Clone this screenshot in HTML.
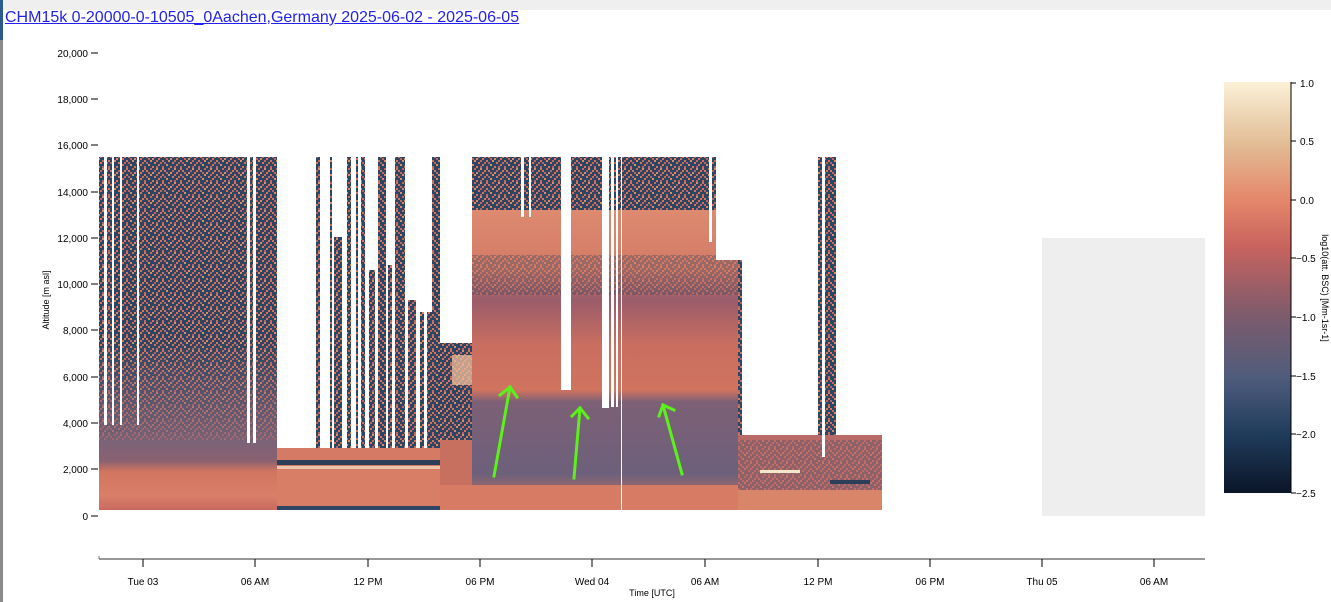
<!DOCTYPE html>
<html><head><meta charset="utf-8"><style>
html,body{margin:0;padding:0;background:#fff;width:1331px;height:602px;overflow:hidden;font-family:"Liberation Sans",sans-serif}
.top{position:absolute;left:0;top:0;width:1331px;height:10px;background:#efefef}
.lb{position:absolute;left:0;top:0;width:3px;height:602px;background:#8a8a8a}
.lb2{position:absolute;left:0;top:0;width:3px;height:40px;background:#2c5a8c}
a{position:absolute;left:5px;top:9px;font-size:16px;color:#2222ee;text-decoration:underline;white-space:nowrap}
svg{position:absolute;left:0;top:0}
</style></head><body>
<div class="top"></div><div class="lb"></div><div class="lb2"></div>
<a>CHM15k 0-20000-0-10505_0Aachen,Germany 2025-06-02 - 2025-06-05</a>
<svg width="1331" height="602" viewBox="0 0 1331 602" font-family="Liberation Sans, sans-serif">
<defs>
<pattern id="nz" width="18" height="14" patternUnits="userSpaceOnUse">
<rect width="18" height="14" fill="#2b4562"/>
<rect x="0" y="0" width="2" height="2" fill="#d8735e"/><rect x="6" y="0" width="2" height="2" fill="#c8685c"/><rect x="12" y="0" width="2" height="2" fill="#e08a68"/>
<rect x="2" y="2" width="2" height="2" fill="#d8735e"/><rect x="10" y="2" width="2" height="2" fill="#b6636a"/><rect x="16" y="2" width="2" height="2" fill="#d8735e"/>
<rect x="4" y="4" width="2" height="2" fill="#c8685c"/><rect x="8" y="4" width="2" height="2" fill="#e08a68"/><rect x="14" y="4" width="2" height="2" fill="#d8735e"/>
<rect x="0" y="6" width="2" height="2" fill="#d8735e"/><rect x="6" y="6" width="2" height="2" fill="#e08a68"/><rect x="12" y="6" width="2" height="2" fill="#c8685c"/>
<rect x="2" y="8" width="2" height="2" fill="#b6636a"/><rect x="10" y="8" width="2" height="2" fill="#d8735e"/><rect x="16" y="8" width="2" height="2" fill="#c8685c"/>
<rect x="4" y="10" width="2" height="2" fill="#e08a68"/><rect x="14" y="10" width="2" height="2" fill="#d8735e"/>
<rect x="0" y="12" width="2" height="2" fill="#c8685c"/><rect x="8" y="12" width="2" height="2" fill="#d8735e"/><rect x="12" y="12" width="2" height="2" fill="#b6636a"/>
</pattern>
<linearGradient id="cb" x1="0" y1="0" x2="0" y2="1">
<stop offset="0" stop-color="#fbf1d8"/><stop offset="0.15" stop-color="#e2bd95"/><stop offset="0.29" stop-color="#e4866a"/><stop offset="0.4" stop-color="#c8635e"/><stop offset="0.57" stop-color="#7c5b6c"/><stop offset="0.72" stop-color="#4f5c7c"/><stop offset="0.86" stop-color="#1f3b5a"/><stop offset="1" stop-color="#0b1528"/>
</linearGradient>
<linearGradient id="low" x1="0" y1="0" x2="0" y2="1">
<stop offset="0" stop-color="#7a6378"/><stop offset="0.3" stop-color="#8a6170"/><stop offset="0.45" stop-color="#d27560"/><stop offset="0.8" stop-color="#d97e68"/><stop offset="1" stop-color="#c96a60"/>
</linearGradient>
<linearGradient id="mid" x1="0" y1="0" x2="0" y2="1">
<stop offset="0" stop-color="#dc8a70"/><stop offset="0.2" stop-color="#d47a66"/><stop offset="0.3" stop-color="#9a5c6a" /><stop offset="0.45" stop-color="#c96e60"/><stop offset="0.6" stop-color="#d0735f"/><stop offset="0.64" stop-color="#7c6076"/><stop offset="0.88" stop-color="#6d607a"/><stop offset="1" stop-color="#d6765f"/>
</linearGradient>
<linearGradient id="fade" x1="0" y1="0" x2="0" y2="1">
<stop offset="0" stop-color="#8d6878" stop-opacity="0"/><stop offset="1" stop-color="#8d6878" stop-opacity="0.85"/>
</linearGradient>
</defs>
<g font-size="10" fill="#000" text-anchor="end">
<text x="88" y="57">20,000</text><line x1="91" y1="53" x2="98" y2="53" stroke="#000"/>
<text x="88" y="103">18,000</text><line x1="91" y1="99" x2="98" y2="99" stroke="#000"/>
<text x="88" y="149">16,000</text><line x1="91" y1="145" x2="98" y2="145" stroke="#000"/>
<text x="88" y="196">14,000</text><line x1="91" y1="192" x2="98" y2="192" stroke="#000"/>
<text x="88" y="242">12,000</text><line x1="91" y1="238" x2="98" y2="238" stroke="#000"/>
<text x="88" y="288">10,000</text><line x1="91" y1="284" x2="98" y2="284" stroke="#000"/>
<text x="88" y="334">8,000</text><line x1="91" y1="330" x2="98" y2="330" stroke="#000"/>
<text x="88" y="381">6,000</text><line x1="91" y1="377" x2="98" y2="377" stroke="#000"/>
<text x="88" y="427">4,000</text><line x1="91" y1="423" x2="98" y2="423" stroke="#000"/>
<text x="88" y="473">2,000</text><line x1="91" y1="469" x2="98" y2="469" stroke="#000"/>
<text x="88" y="520">0</text><line x1="91" y1="516" x2="98" y2="516" stroke="#000"/>
</g>
<text transform="translate(49,300) rotate(-90)" font-size="9" text-anchor="middle">Altitude [m asl]</text>
<rect x="1042" y="238" width="163" height="278" fill="#eeeeee"/>
<rect x="99" y="157" width="178" height="290" fill="url(#nz)"/>
<rect x="99" y="340" width="178" height="107" fill="url(#fade)"/>
<rect x="99" y="440" width="178" height="70" fill="url(#low)"/>
<rect x="277" y="448" width="163" height="62" fill="#d57a64"/>
<rect x="277" y="460" width="163" height="5" fill="#2d3e58"/>
<rect x="277" y="466" width="163" height="3" fill="#f4e6c8" opacity="0.7"/>
<rect x="277" y="470" width="163" height="40" fill="#d87d66"/>
<rect x="277" y="506" width="210" height="4" fill="#2d4664"/>
<g fill="url(#nz)">
<rect x="316" y="157" width="4" height="291"/><rect x="330" y="157" width="2" height="291"/>
<rect x="334" y="237" width="8" height="211"/><rect x="347" y="157" width="4" height="291"/>
<rect x="356" y="157" width="2" height="291"/><rect x="361" y="157" width="4" height="291"/>
<rect x="369" y="270" width="6" height="178"/><rect x="378" y="157" width="8" height="291"/>
<rect x="388" y="265" width="4" height="183"/><rect x="395" y="157" width="10" height="291"/>
<rect x="408" y="300" width="8" height="148"/><rect x="420" y="312" width="4" height="136"/>
<rect x="427" y="310" width="5" height="138"/><rect x="432" y="157" width="8" height="291"/>
<rect x="440" y="343" width="32" height="105"/><rect x="818" y="157" width="18" height="300"/>
<rect x="712" y="157" width="4" height="90"/><rect x="738" y="260" width="4" height="190"/>
</g>
<rect x="472" y="157" width="266" height="60" fill="url(#nz)"/>
<rect x="472" y="210" width="266" height="300" fill="url(#mid)"/>
<rect x="472" y="255" width="266" height="40" fill="url(#nz)" opacity="0.35"/>
<rect x="440" y="440" width="32" height="70" fill="#c87060"/>
<rect x="452" y="355" width="20" height="30" fill="#e9b79a" opacity="0.8"/>
<rect x="440" y="485" width="300" height="25" fill="#d77b65"/>
<rect x="738" y="435" width="144" height="75" fill="#b96b6a"/>
<rect x="738" y="440" width="144" height="60" fill="url(#nz)" opacity="0.3"/>
<rect x="738" y="490" width="144" height="20" fill="#d98569"/>
<rect x="760" y="470" width="40" height="3" fill="#f4e6c8"/>
<rect x="830" y="480" width="40" height="4" fill="#2d3e58"/>
<g fill="#fff">
<rect x="104" y="157" width="3" height="268"/><rect x="112" y="157" width="2" height="268"/>
<rect x="120" y="157" width="2" height="268"/><rect x="137" y="157" width="2" height="268"/>
<rect x="247" y="157" width="3" height="286"/><rect x="253" y="157" width="3" height="286"/>
<rect x="277" y="157" width="39" height="291"/><rect x="320" y="157" width="10" height="291"/>
<rect x="332" y="157" width="15" height="80"/><rect x="342" y="237" width="5" height="211"/>
<rect x="351" y="157" width="5" height="291"/><rect x="358" y="157" width="3" height="291"/>
<rect x="365" y="157" width="4" height="291"/><rect x="369" y="157" width="6" height="113"/>
<rect x="375" y="157" width="3" height="291"/><rect x="386" y="157" width="2" height="291"/>
<rect x="388" y="157" width="4" height="108"/><rect x="392" y="157" width="3" height="291"/>
<rect x="405" y="157" width="3" height="291"/><rect x="408" y="157" width="8" height="143"/>
<rect x="416" y="157" width="4" height="291"/><rect x="420" y="157" width="12" height="155"/>
<rect x="424" y="312" width="3" height="136"/>
<rect x="440" y="157" width="32" height="186"/>
<rect x="521" y="157" width="3" height="60"/><rect x="529" y="157" width="2" height="60"/>
<rect x="561" y="157" width="10" height="233"/><rect x="602" y="157" width="7" height="251"/>
<rect x="611" y="157" width="3" height="250"/><rect x="616" y="157" width="2" height="250"/>
<rect x="621" y="157" width="1" height="353"/>
<rect x="709" y="157" width="3" height="85"/><rect x="716" y="157" width="22" height="103"/>
<rect x="742" y="157" width="76" height="278"/><rect x="822" y="157" width="3" height="300"/>
<rect x="836" y="157" width="46" height="278"/>
</g>
<g stroke="#5cf01c" stroke-width="3" fill="none" stroke-linecap="square">
<line x1="494" y1="476" x2="510" y2="387"/><polyline points="500,395 510,387 517,397"/>
<line x1="574" y1="478" x2="580" y2="408"/><polyline points="572,416 580,408 588,418"/>
<line x1="682" y1="474" x2="663" y2="405"/><polyline points="659,416 663,405 674,410"/>
</g>
<line x1="99" y1="559" x2="1205" y2="559" stroke="#777" stroke-width="1.5"/>
<line x1="99" y1="556" x2="99" y2="559" stroke="#777"/>
<g stroke="#000"><line x1="143" y1="559" x2="143" y2="567"/><line x1="255" y1="559" x2="255" y2="567"/><line x1="368" y1="559" x2="368" y2="567"/><line x1="480" y1="559" x2="480" y2="567"/><line x1="592" y1="559" x2="592" y2="567"/><line x1="705" y1="559" x2="705" y2="567"/><line x1="818" y1="559" x2="818" y2="567"/><line x1="930" y1="559" x2="930" y2="567"/><line x1="1042" y1="559" x2="1042" y2="567"/><line x1="1154" y1="559" x2="1154" y2="567"/></g>
<g font-size="10" text-anchor="middle">
<text x="143" y="585">Tue 03</text><text x="255" y="585">06 AM</text><text x="368" y="585">12 PM</text><text x="480" y="585">06 PM</text><text x="592" y="585">Wed 04</text><text x="705" y="585">06 AM</text><text x="818" y="585">12 PM</text><text x="930" y="585">06 PM</text><text x="1042" y="585">Thu 05</text><text x="1154" y="585">06 AM</text>
<text x="652" y="596" font-size="9">Time [UTC]</text>
</g>
<rect x="1224" y="82" width="67" height="411" fill="url(#cb)"/>
<line x1="1291" y1="82" x2="1291" y2="493" stroke="#000"/>
<g font-size="10">
<g stroke="#000"><line x1="1291" y1="83" x2="1296" y2="83"/><line x1="1291" y1="141" x2="1296" y2="141"/><line x1="1291" y1="200" x2="1296" y2="200"/><line x1="1291" y1="258" x2="1296" y2="258"/><line x1="1291" y1="317" x2="1296" y2="317"/><line x1="1291" y1="376" x2="1296" y2="376"/><line x1="1291" y1="434" x2="1296" y2="434"/><line x1="1291" y1="493" x2="1296" y2="493"/></g>
<text x="1300" y="87">1.0</text><text x="1300" y="145">0.5</text><text x="1300" y="204">0.0</text><text x="1296" y="262">−0.5</text><text x="1296" y="321">−1.0</text><text x="1296" y="380">−1.5</text><text x="1296" y="438">−2.0</text><text x="1296" y="497">−2.5</text>
</g>
<text transform="translate(1322,288) rotate(90)" font-size="9" text-anchor="middle">log10(att. BSC) [Mm-1sr-1]</text>
</svg>
</body></html>
